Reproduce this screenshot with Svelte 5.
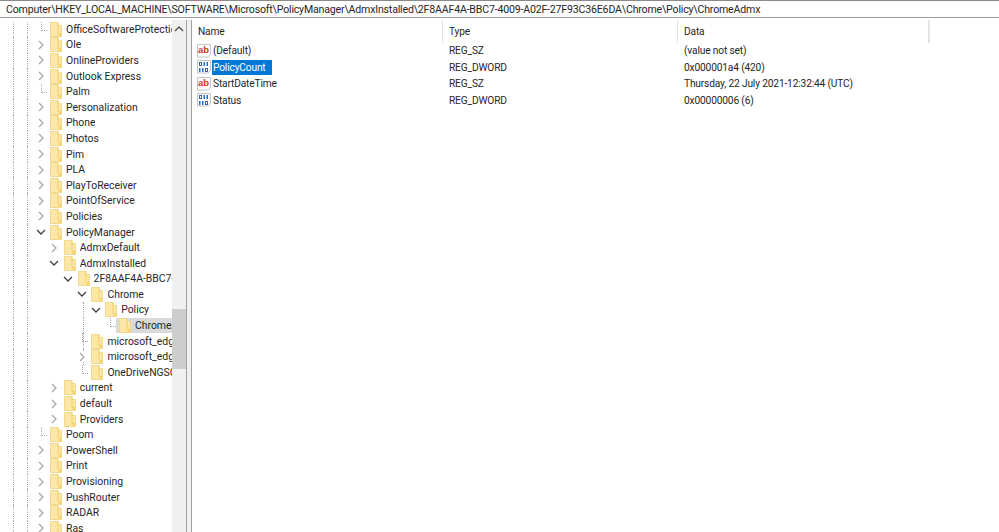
<script lang="ts">
    type Row = { label: string; depth: number; exp?: 'open' | 'closed'; guides?: number[]; sel?: boolean };

    // guide x positions: 13 and 27 run down the whole tree
    const treeRows: Row[] = [
        { label: 'OfficeSoftwareProtectionPlatform', depth: 0 },
        { label: 'Ole', depth: 0, exp: 'closed' },
        { label: 'OnlineProviders', depth: 0, exp: 'closed' },
        { label: 'Outlook Express', depth: 0, exp: 'closed' },
        { label: 'Palm', depth: 0 },
        { label: 'Personalization', depth: 0, exp: 'closed' },
        { label: 'Phone', depth: 0, exp: 'closed' },
        { label: 'Photos', depth: 0, exp: 'closed' },
        { label: 'Pim', depth: 0, exp: 'closed' },
        { label: 'PLA', depth: 0, exp: 'closed' },
        { label: 'PlayToReceiver', depth: 0, exp: 'closed' },
        { label: 'PointOfService', depth: 0, exp: 'closed' },
        { label: 'Policies', depth: 0, exp: 'closed' },
        { label: 'PolicyManager', depth: 0, exp: 'open' },
        { label: 'AdmxDefault', depth: 1, exp: 'closed' },
        { label: 'AdmxInstalled', depth: 1, exp: 'open' },
        { label: '2F8AAF4A-BBC7-4009-A02F-27F93C36E6DA', depth: 2, exp: 'open' },
        { label: 'Chrome', depth: 3, exp: 'open' },
        { label: 'Policy', depth: 4, exp: 'open', guides: [83] },
        { label: 'ChromeAdmx', depth: 5, guides: [83], sel: true },
        { label: 'microsoft_edge', depth: 3, guides: [83] },
        { label: 'microsoft_edge', depth: 3, exp: 'closed', guides: [83] },
        { label: 'OneDriveNGSC', depth: 3 },
        { label: 'current', depth: 1, exp: 'closed' },
        { label: 'default', depth: 1, exp: 'closed' },
        { label: 'Providers', depth: 1, exp: 'closed' },
        { label: 'Poom', depth: 0 },
        { label: 'PowerShell', depth: 0, exp: 'closed' },
        { label: 'Print', depth: 0, exp: 'closed' },
        { label: 'Provisioning', depth: 0, exp: 'closed' },
        { label: 'PushRouter', depth: 0, exp: 'closed' },
        { label: 'RADAR', depth: 0, exp: 'closed' },
        { label: 'Ras', depth: 0, exp: 'closed' }
    ];

    const values = [
        { name: '(Default)', kind: 'sz', type: 'REG_SZ', data: '(value not set)' },
        { name: 'PolicyCount', kind: 'dw', type: 'REG_DWORD', data: '0x000001a4 (420)', sel: true },
        { name: 'StartDateTime', kind: 'sz', type: 'REG_SZ', data: 'Thursday, 22 July 2021-12:32:44 (UTC)' },
        { name: 'Status', kind: 'dw', type: 'REG_DWORD', data: '0x00000006 (6)' }
    ];
</script>

<div class="window">
    <div class="address">Computer\HKEY_LOCAL_MACHINE\SOFTWARE\Microsoft\PolicyManager\AdmxInstalled\2F8AAF4A-BBC7-4009-A02F-27F93C36E6DA\Chrome\Policy\ChromeAdmx</div>
    <div class="panes">
        <div class="tree">
            {#each treeRows as row}
                <div class="tree-row" style="padding-left: {34 + row.depth * 13.8}px">
                    <i class="guide" style="left: 13px"></i>
                    <i class="guide" style="left: 27px"></i>
                    {#each row.guides ?? [] as g}
                        <i class="guide" style="left: {g}px"></i>
                    {/each}
                    <span class="exp">
                        {#if row.exp === 'closed'}
                            <svg width="6" height="10" viewBox="0 0 6 10"><path d="M1 1l4 4-4 4" fill="none" stroke="#a8a8a8" stroke-width="1.3" /></svg>
                        {:else if row.exp === 'open'}
                            <svg width="10" height="6" viewBox="0 0 10 6"><path d="M1 1l4 4 4-4" fill="none" stroke="#404040" stroke-width="1.3" /></svg>
                        {:else}
                            <i class="elbow"></i>
                        {/if}
                    </span>
                    <span class="item" class:sel={row.sel}>
                        <svg class="folder" width="12" height="15" viewBox="0 0 12 15">
                            <path d="M.5 .5h7.500v3h3.500v11h-11z" fill="#fce7a8" stroke="#f0d98c" />
                            <path d="M8 .5v11h3.500" fill="none" stroke="#f3cf68" />
                            <path d="M8.500 11.500h3v3h-3z" fill="#f9d675" />
                        </svg>
                        <span class="label">{row.label}</span>
                    </span>
                </div>
            {/each}
        </div>
        <div class="scrollbar">
            <svg class="up" width="10" height="6" viewBox="0 0 10 6"><path d="M1 5l4-4 4 4" fill="none" stroke="#505050" stroke-width="1.4" /></svg>
            <div class="thumb"></div>
        </div>
        <div class="splitter"></div>
        <div class="list">
            <div class="head">
                <div class="col name">Name</div>
                <div class="col type">Type</div>
                <div class="col data">Data</div>
                <div class="col rest"></div>
            </div>
            {#each values as v}
                <div class="value">
                    <div class="col name">
                        <svg class="vicon" width="14" height="14" viewBox="0 0 14 14">
                            <path d="M.5 .5h13v9.500l-2 3h-11z" fill="#fff" stroke="#c4c4c4" />
                            {#if v.kind === 'sz'}
                                <text x="1" y="9" class="ab">ab</text>
                            {:else}
                                <g fill="#2b68bd">
                                    <rect x="2" y="2" width="3" height="4" />
                                    <rect x="6.500" y="2" width="1.500" height="4" />
                                    <rect x="9.500" y="2" width="1.500" height="4" />
                                    <rect x="2" y="8" width="1.500" height="4" />
                                    <rect x="5" y="8" width="1.500" height="4" />
                                    <rect x="8" y="8" width="3" height="4" />
                                </g>
                                <g fill="#fff">
                                    <rect x="3" y="3" width="1" height="2" />
                                    <rect x="9" y="9" width="1" height="2" />
                                </g>
                            {/if}
                        </svg>
                        <span class="vname" class:sel={v.sel}>{v.name}</span>
                    </div>
                    <div class="col type">{v.type}</div>
                    <div class="col data">{v.data}</div>
                </div>
            {/each}
        </div>
    </div>
</div>

<style>
    :global(body) {
        margin: 0;
        background: #fff;
    }

    .window {
        width: 999px;
        height: 532px;
        overflow: hidden;
        display: flex;
        flex-direction: column;
        font-family: Roboto, "Noto Sans", sans-serif;
        font-size: 10.4px;
        color: #262626;
    }

    .address {
        flex: none;
        height: 16px;
        line-height: 18px;
        padding-left: 6px;
        border-top: 1px solid #8a8a8a;
        border-bottom: 1px solid #9a9a9a;
        white-space: nowrap;
        margin-bottom: 2px;
        font-size: 10.6px;
        letter-spacing: -0.19px;
    }

    .panes {
        flex: 1;
        display: flex;
        min-height: 0;
    }

    .tree {
        flex: none;
        width: 172px;
        overflow: hidden;
        padding-top: 1.5px;
    }

    .tree-row {
        position: relative;
        height: 15.6px;
        display: flex;
        align-items: center;
        white-space: nowrap;
        box-sizing: border-box;
    }

    .guide {
        position: absolute;
        top: 0;
        bottom: 0;
        width: 0;
        border-left: 1px dotted #a8a8a8;
    }

    .exp {
        flex: none;
        width: 13px;
        height: 100%;
        position: relative;
        display: flex;
        align-items: center;
        justify-content: center;
    }

    .exp svg {
        background: #fff;
        position: relative;
    }

    .elbow {
        position: absolute;
        left: 7px;
        top: 0;
        width: 5px;
        height: 8px;
        border-left: 1px dotted #a8a8a8;
        border-bottom: 1px dotted #a8a8a8;
    }

    .item {
        flex: 1;
        min-width: 0;
        height: 100%;
        display: flex;
        align-items: center;
        gap: 4px;
        padding-left: 3px;
    }

    .item.sel {
        background: #d9d9d9;
    }

    .folder {
        flex: none;
    }

    .label {
        min-width: 0;
        overflow: hidden;
    }

    .scrollbar {
        flex: none;
        width: 14px;
        background: #f0f0f0;
        position: relative;
    }

    .up {
        position: absolute;
        left: 2px;
        top: 6px;
    }

    .thumb {
        position: absolute;
        left: 0;
        right: 0;
        top: 289px;
        height: 60px;
        background: #cdcdcd;
    }

    .splitter {
        flex: none;
        width: 4px;
        background: #f0f0f0;
        border-left: 1px solid #a0a0a0;
        border-right: 1px solid #a0a0a0;
    }

    .list {
        flex: 1;
        min-width: 0;
        font-size: 10.2px;
        letter-spacing: -0.16px;
    }

    .head {
        display: flex;
        height: 22.5px;
        align-items: stretch;
    }

    .head .col {
        border-right: 1px solid #e5e5e5;
        display: flex;
        align-items: center;
        box-sizing: border-box;
    }

    .value {
        display: flex;
        height: 16.5px;
        align-items: center;
    }

    .col.name {
        width: 251px;
        padding-left: 6px;
        box-sizing: border-box;
        display: flex;
        align-items: center;
    }

    .col.type {
        width: 235px;
        padding-left: 6px;
        box-sizing: border-box;
    }

    .col.data {
        width: 251px;
        padding-left: 6px;
        box-sizing: border-box;
    }

    .value .col.name {
        padding-left: 5px;
    }

    .vicon {
        flex: none;
        margin-right: 1px;
    }

    .ab {
        font-family: "Liberation Sans", sans-serif;
        font-size: 9.500px;
        font-weight: 700;
        letter-spacing: 0;
        fill: #d4341f;
    }

    .vname {
        line-height: 15px;
        padding: 0 6px 0 1px;
    }

    .vname.sel {
        background: #0078d7;
        color: #fff;
    }
</style>
